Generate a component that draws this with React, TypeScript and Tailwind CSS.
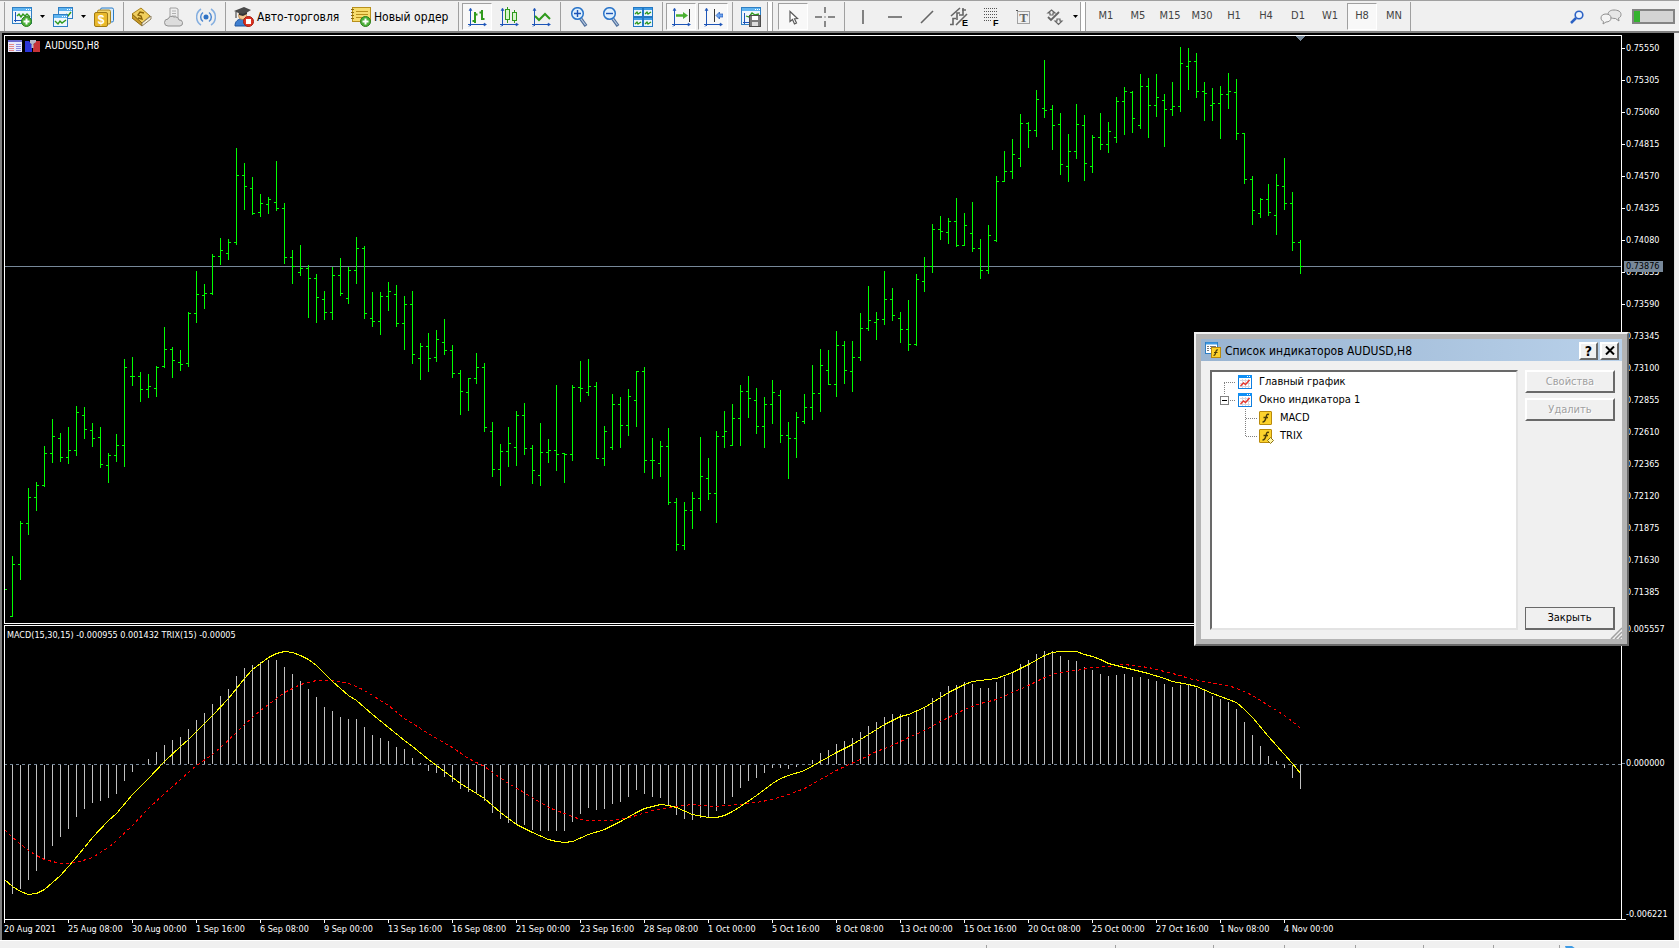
import React, { useState } from 'react';
import clsx from 'clsx';

type Bar = [open: number, high: number, low: number, close: number];
type Point = [bar: number, y: number];

const BAR_STEP = 8;
const BAR_START = 4;
const ZERO_Y = 764;

const barX = (index: number) => BAR_START + index * BAR_STEP;

const BARS: Bar[] = [
  [589, 589, 589, 589], [616, 556, 617, 564], [564, 521, 580, 523], [523, 488, 535, 497], [497, 482, 511, 485],
  [485, 446, 487, 453], [453, 419, 463, 436], [438, 433, 462, 457], [457, 427, 464, 450], [450, 406, 456, 412],
  [415, 407, 439, 429], [430, 423, 447, 438], [437, 427, 468, 464], [465, 453, 483, 455], [455, 434, 462, 445],
  [445, 359, 467, 367], [376, 357, 386, 376], [376, 372, 402, 389], [389, 374, 398, 386], [388, 366, 397, 367],
  [366, 327, 368, 349], [349, 347, 378, 360], [362, 350, 371, 364], [363, 312, 367, 313], [313, 271, 323, 294],
  [295, 284, 309, 293], [293, 254, 295, 256], [256, 238, 265, 250], [253, 239, 260, 242], [242, 148, 245, 175],
  [175, 163, 210, 186], [188, 177, 215, 213], [212, 194, 217, 203], [204, 197, 214, 199], [202, 161, 211, 208],
  [208, 203, 264, 257], [257, 250, 284, 266], [272, 245, 276, 268], [268, 265, 318, 278], [278, 274, 323, 297],
  [299, 291, 320, 312], [312, 267, 320, 275], [275, 258, 296, 293], [298, 267, 304, 270], [270, 237, 284, 248],
  [248, 246, 319, 313], [318, 292, 327, 321], [321, 292, 335, 296], [296, 282, 311, 291], [294, 285, 327, 323],
  [323, 296, 350, 304], [304, 291, 364, 354], [358, 343, 380, 346], [346, 333, 372, 358], [357, 330, 362, 339],
  [342, 319, 355, 350], [350, 345, 378, 373], [373, 370, 415, 391], [392, 378, 411, 378], [378, 353, 384, 367],
  [367, 363, 432, 427], [431, 422, 477, 469], [469, 444, 486, 451], [451, 427, 467, 443], [447, 411, 466, 415],
  [415, 403, 455, 448], [448, 445, 484, 470], [475, 423, 486, 452], [452, 439, 463, 450], [450, 385, 471, 454],
  [453, 453, 483, 454], [454, 385, 461, 387], [387, 361, 402, 388], [392, 359, 396, 386], [386, 382, 459, 458],
  [458, 426, 466, 431], [447, 394, 450, 404], [404, 397, 448, 425], [425, 389, 436, 396], [400, 371, 427, 371],
  [371, 367, 473, 460], [460, 438, 479, 460], [463, 441, 477, 446], [446, 428, 505, 502], [502, 498, 551, 544],
  [545, 502, 550, 510], [510, 492, 529, 498], [498, 437, 511, 476], [478, 458, 500, 493], [493, 431, 523, 436],
  [436, 411, 448, 431], [445, 404, 446, 418], [418, 385, 446, 391], [391, 376, 418, 398], [400, 388, 434, 426],
  [426, 397, 448, 404], [404, 380, 424, 392], [395, 390, 443, 435], [435, 422, 479, 438], [438, 412, 458, 417],
  [421, 394, 424, 407], [407, 365, 420, 393], [393, 349, 412, 365], [370, 350, 385, 384], [384, 331, 397, 345],
  [345, 341, 384, 370], [371, 341, 392, 357], [357, 313, 361, 328], [328, 286, 331, 320], [322, 312, 340, 319],
  [319, 271, 325, 299], [299, 288, 321, 315], [318, 312, 343, 329], [329, 300, 351, 344], [344, 274, 346, 279],
  [281, 257, 292, 266], [266, 224, 273, 229], [229, 216, 240, 231], [232, 218, 244, 221], [221, 198, 247, 245],
  [245, 213, 246, 225], [233, 202, 252, 248], [248, 239, 279, 270], [270, 225, 274, 235], [240, 176, 242, 181],
  [181, 151, 182, 171], [171, 139, 179, 154], [158, 114, 167, 123], [123, 122, 148, 130], [130, 90, 137, 99],
  [108, 60, 118, 110], [109, 105, 150, 125], [124, 113, 175, 164], [166, 134, 182, 151], [151, 104, 159, 124],
  [125, 115, 181, 163], [166, 135, 173, 137], [137, 113, 150, 144], [144, 122, 153, 131], [137, 97, 143, 101],
  [101, 87, 135, 91], [92, 91, 133, 118], [125, 74, 129, 86], [86, 78, 138, 105], [105, 74, 117, 97],
  [100, 94, 147, 109], [109, 82, 116, 106], [106, 47, 112, 63], [66, 48, 90, 61], [61, 53, 98, 91],
  [91, 82, 121, 93], [105, 88, 121, 103], [103, 86, 139, 94], [94, 73, 109, 91], [92, 79, 140, 133],
  [133, 133, 184, 179], [179, 176, 225, 210], [213, 198, 218, 199], [199, 184, 216, 212], [215, 174, 235, 185],
  [186, 158, 210, 203], [203, 192, 251, 242], [242, 240, 274, 266],
];

const HISTOGRAM: number[] = [
  764, 894, 889, 880, 871, 859, 846, 837, 829, 817, 809, 803, 801, 798, 794, 781, 772, 764, 759, 752,
  745, 740, 737, 729, 720, 713, 704, 696, 689, 676, 668, 665, 662, 660, 660, 667, 674, 681, 689, 697,
  707, 711, 717, 719, 719, 727, 735, 738, 741, 747, 749, 758, 763, 771, 773, 777, 782, 789, 792, 794,
  801, 813, 819, 823, 824, 825, 830, 831, 831, 831, 831, 822, 814, 808, 810, 809, 804, 802, 797, 790,
  794, 797, 798, 806, 815, 819, 820, 818, 818, 811, 804, 797, 788, 781, 778, 773, 768, 768, 769, 767,
  764, 760, 753, 750, 744, 741, 738, 732, 726, 722, 717, 714, 714, 717, 710, 707, 698, 692, 686, 685,
  682, 684, 688, 688, 682, 677, 672, 664, 660, 654, 651, 651, 656, 660, 661, 667, 670, 674, 676, 675,
  674, 677, 677, 679, 681, 684, 687, 685, 685, 688, 691, 696, 699, 702, 709, 722, 735, 746, 756, 761,
  768, 778, 789,
];

const TRIX: Point[] = [
  [0, 879], [1, 886], [2, 891], [3, 894], [4, 893], [5, 889], [6, 882], [7, 875], [8, 866], [10, 847],
  [11, 837], [13, 820], [14, 813], [16, 794], [18, 778], [20, 761], [22, 746], [23, 739], [26, 715], [28, 698],
  [30, 678], [31, 669], [32, 663], [33, 657], [34, 653], [35, 651], [36, 652], [37, 655], [38, 659], [39, 665],
  [40, 673], [41, 681], [43, 695], [44, 700], [46, 714], [48, 727], [50, 740], [51, 746], [53, 759], [55, 771],
  [57, 783], [59, 793], [60, 798], [62, 812], [64, 824], [66, 832], [68, 839], [69, 841], [70, 842], [71, 841],
  [73, 834], [75, 829], [77, 821], [79, 812], [80, 808], [81, 806], [82, 804], [83, 805], [84, 807], [86, 814],
  [88, 817], [89, 817], [90, 815], [91, 811], [92, 806], [94, 795], [96, 783], [97, 778], [98, 775], [100, 770],
  [102, 761], [104, 752], [106, 744], [108, 734], [110, 724], [112, 716], [113, 714], [115, 707], [116, 702],
  [118, 692], [120, 684], [121, 681], [122, 680], [124, 678], [126, 672], [128, 664], [130, 655], [131, 652],
  [132, 651], [134, 651], [135, 654], [136, 656], [137, 659], [138, 663], [139, 665], [141, 669], [143, 673],
  [145, 678], [146, 681], [148, 684], [149, 686], [151, 693], [153, 699], [154, 702], [155, 709], [156, 717],
  [158, 736], [160, 754], [161, 763], [162, 773],
];

const SIGNAL: Point[] = [
  [0, 829], [1, 837], [3, 850], [4, 855], [5, 859], [6, 861], [7, 863], [8, 863], [9, 862], [11, 857],
  [13, 847], [14, 840], [16, 825], [18, 808], [20, 793], [22, 779], [23, 772], [24, 765], [26, 754], [27, 747],
  [29, 732], [30, 724], [32, 710], [34, 698], [35, 692], [36, 688], [37, 684], [38, 682], [39, 680], [41, 680],
  [42, 681], [43, 683], [44, 686], [45, 690], [47, 700], [48, 705], [50, 718], [52, 728], [54, 738], [56, 747],
  [58, 758], [60, 766], [61, 772], [63, 783], [66, 797], [68, 807], [69, 810], [71, 816], [72, 819], [73, 820],
  [76, 820], [78, 817], [79, 815], [81, 810], [83, 807], [85, 805], [86, 804], [87, 805], [89, 806], [90, 805],
  [92, 804], [94, 802], [96, 799], [98, 794], [100, 788], [102, 779], [104, 770], [105, 766], [107, 759],
  [109, 751], [111, 745], [113, 737], [115, 730], [117, 721], [119, 713], [120, 709], [122, 703], [124, 699],
  [126, 692], [128, 685], [130, 677], [131, 674], [132, 672], [134, 670], [136, 667], [138, 666], [140, 664],
  [141, 665], [143, 667], [145, 671], [147, 675], [148, 678], [150, 681], [152, 684], [153, 685], [155, 691],
  [156, 695], [158, 705], [160, 715], [161, 721], [162, 728],
];

const PRICES = [
  '0.75550', '0.75305', '0.75060', '0.74815', '0.74570', '0.74325', '0.74080', '0.73835', '0.73590',
  '0.73345', '0.73100', '0.72855', '0.72610', '0.72365', '0.72120', '0.71875', '0.71630', '0.71385',
];

const DATES = [
  '20 Aug 2021', '25 Aug 08:00', '30 Aug 00:00', '1 Sep 16:00', '6 Sep 08:00', '9 Sep 00:00', '13 Sep 16:00',
  '16 Sep 08:00', '21 Sep 00:00', '23 Sep 16:00', '28 Sep 08:00', '1 Oct 00:00', '5 Oct 16:00', '8 Oct 08:00',
  '13 Oct 00:00', '15 Oct 16:00', '20 Oct 08:00', '25 Oct 00:00', '27 Oct 16:00', '1 Nov 08:00', '4 Nov 00:00',
];

const TIMEFRAMES = ['M1', 'M5', 'M15', 'M30', 'H1', 'H4', 'D1', 'W1', 'H8', 'MN'];

const toPath = (points: Point[]) =>
  points.map(([bar, y], i) => `${i === 0 ? 'M' : 'L'}${barX(bar) + 0.5} ${y + 0.5}`).join('');

/* ---------- icons ---------- */

const Icon: React.FC<{ children: React.ReactNode }> = ({ children }) => (
  <svg width="20" height="20" viewBox="0 0 20 20" fill="none" aria-hidden="true" className="shrink-0">
    {children}
  </svg>
);

const WindowFrame = ({ x, y, w, h }: { x: number; y: number; w: number; h: number }) => (
  <g>
    <rect x={x + 0.5} y={y + 0.5} width={w - 1} height={h - 1} fill="#eef6fd" stroke="#2f7fc4" />
    <rect x={x + 1} y={y + 1} width={w - 2} height="3" fill="#5fb4f0" />
    <path d={`M${x + w - 6} ${y + 2.5}h1m1 0h1m1 0h1`} stroke="#fff" />
  </g>
);

const PlusBadge = () => (
  <g>
    <circle cx="14.5" cy="14.5" r="5" fill="#4db13a" stroke="#2b7d1c" />
    <path d="M14.5 11.5v6M11.5 14.5h6" stroke="#fff" strokeWidth="2" />
  </g>
);

const Axes = () => (
  <g stroke="#1d55b8" fill="#1d55b8">
    <path d="M3.5 3v16M1 17.5h17" />
    <path d="M2 3.5L3.5 1 5 3.5zM17 16l2.5 1.5L17 19z" strokeWidth="0.5" />
    <path d="M2 19.5l2-2" />
  </g>
);

const NewChartIcon = () => (
  <Icon>
    <WindowFrame x={0} y={0} w={20} h={17} />
    <path d="M3.5 5v10M2 13.5h9" stroke="#1d55b8" />
    <path d="M5 9l2-2 2 3 2-3 2 2 2-2 3 3" stroke="#2f9a1c" strokeWidth="1.4" />
    <PlusBadge />
  </Icon>
);

const ProfilesIcon = () => (
  <Icon>
    <WindowFrame x={5} y={0} w={15} h={12} />
    <path d="M13 7l2 2 3-4" stroke="#2f9a1c" strokeWidth="1.4" />
    <WindowFrame x={0} y={7} w={15} h={13} />
    <path d="M2 14l3 3 2-3 2 2 4-3" stroke="#2f9a1c" strokeWidth="1.4" />
  </Icon>
);

const SymbolsIcon = () => (
  <Icon>
    <rect x="6.5" y="1" width="13" height="14" rx="1.5" fill="#d9ecfb" stroke="#2a7cc8" />
    <rect x="3.5" y="3" width="13" height="14" rx="1.5" fill="#f3d56a" stroke="#a88420" />
    <rect x="0.5" y="5.5" width="13" height="14" rx="1.5" fill="#e9b92c" stroke="#a07a14" />
    <text x="7" y="17" fontSize="12" fontWeight="bold" fill="#fff" textAnchor="middle" fontFamily="Liberation Sans, sans-serif">$</text>
  </Icon>
);

const BookIcon = () => (
  <Icon>
    <path d="M0 7L9 1l9 8-8 7z" fill="#f1cf5e" stroke="#a9821d" />
    <path d="M0 7v4l10 8v-3z" fill="#c99a27" stroke="#8e6a10" />
    <path d="M10 16l9-7v3l-9 7z" fill="#f7f0da" stroke="#8f8264" />
    <path d="M12 6l-4-1-2 3 3 1 1 3-4-1" stroke="#8b6407" strokeWidth="1.4" />
  </Icon>
);

const CloudIcon = () => (
  <Icon>
    <path d="M6 1h6l2 1v10H6z" fill="#eee" stroke="#a0a0a0" />
    <path d="M8 4h4M8 6.5h4M8 9h4" stroke="#b0b0b0" />
    <path d="M4 19a3.5 3.5 0 0 1 0-7 4 4 0 0 1 6-2 4 4 0 0 1 5 3 3 3 0 0 1 1 6z" fill="#dcdcdc" stroke="#909090" />
  </Icon>
);

const SignalIcon = () => (
  <Icon>
    <circle cx="10" cy="10" r="2.5" fill="#2f72c4" />
    <path d="M7 5.500a5.500 5.500 0 0 0 0 9M13 5.500a5.500 5.500 0 0 1 0 9" stroke="#4f8ad2" strokeWidth="1.5" />
    <path d="M5 2a9.500 9.500 0 0 0 0 16M15 2a9.500 9.500 0 0 1 0 16" stroke="#85afe0" strokeWidth="1.5" />
  </Icon>
);

const RobotIcon = () => (
  <Icon>
    <path d="M1 19c0-5 3-7 7-7s7 2 7 7z" fill="#3f7fd0" stroke="#1f549c" />
    <circle cx="8.5" cy="8.5" r="4" fill="#f2c690" stroke="#b07a3c" strokeWidth="0.7" />
    <path d="M0 4l10-4 7 3-8 5z" fill="#4a4a4a" />
    <path d="M5 6v2l4 1 4-2V5L9 7z" fill="#333" />
    <path d="M2 5v6" stroke="#333" />
    <circle cx="14.5" cy="14.5" r="5" fill="#dd3322" stroke="#a81c10" />
    <rect x="12" y="12" width="5" height="5" fill="#fff" />
  </Icon>
);

const OrderIcon = () => (
  <Icon>
    <rect x="1.5" y="0.5" width="18" height="14" fill="#f7dc6c" stroke="#b8901c" />
    <path d="M0 2.5h3M0 5.5h3M0 8.5h3M0 11.5h3" stroke="#8c6b12" />
    <path d="M5 4.5h12M5 7.5h12M5 10.5h6" stroke="#b8901c" />
    <PlusBadge />
  </Icon>
);

const BarsIcon = () => (
  <Icon>
    <Axes />
    <path d="M8 5v11M5.5 14H8M8 7.5h2.5M15 3v10M12.5 5.5H15M15 12h2.5" stroke="#2f9a1c" strokeWidth="2" />
  </Icon>
);

const CandlesIcon = () => (
  <Icon>
    <Axes />
    <path d="M8.5 0v16M15.5 3v13" stroke="#2f9a1c" />
    <rect x="6.5" y="2.5" width="4" height="10" fill="#d7f5cc" stroke="#2f9a1c" />
    <rect x="13.5" y="5.5" width="4" height="8" fill="#d7f5cc" stroke="#2f9a1c" />
  </Icon>
);

const LineIcon = () => (
  <Icon>
    <Axes />
    <path d="M4 9l4 4 6-6 5 5" stroke="#2f9a1c" strokeWidth="2" />
  </Icon>
);

const ZoomIcon = ({ plus = false }: { plus?: boolean }) => (
  <Icon>
    <path d="M12 12l5 7" stroke="#4f6f9c" strokeWidth="3.4" />
    <path d="M12 12l4.500 6" stroke="#b9cbe2" strokeWidth="1.2" />
    <circle cx="8.5" cy="6.5" r="5.8" fill="#dff0fd" stroke="#2a74c9" strokeWidth="1.5" />
    <path d={plus ? 'M5 6.5h7M8.5 3v7' : 'M5 6.5h7'} stroke="#1d55b8" strokeWidth="1.4" />
  </Icon>
);

const TileIcon = () => (
  <Icon>
    {[0, 10].map((x) =>
      [0, 10].map((y) => (
        <g key={`${x}-${y}`}>
          <rect x={x + 0.5} y={y + 0.5} width="9" height="9" fill="#e8f4fd" stroke="#2378c4" />
          <path d={`M${x + 1} ${y + 2}h8`} stroke="#3f9be4" strokeWidth="2" />
          <path d={`M${x + 2} ${y + 7}l2-2 1 2 3-2`} stroke="#2f9a1c" strokeWidth="1.3" />
        </g>
      )),
    )}
  </Icon>
);

const AutoScrollIcon = () => (
  <Icon>
    <Axes />
    <path d="M18.5 2v13" stroke="#333" />
    <path d="M5 8.5h7" stroke="#49b030" strokeWidth="2.5" />
    <path d="M12 5l5 3.500-5 3.500z" fill="#49b030" />
  </Icon>
);

const ShiftIcon = () => (
  <Icon>
    <Axes />
    <path d="M11.5 2v13" stroke="#333" />
    <path d="M13 8.5L16.5 5v2H20v3h-3.500v2z" fill="#6fa5ee" stroke="#1d55b8" strokeWidth="0.7" />
  </Icon>
);

const TemplateIcon = () => (
  <Icon>
    <WindowFrame x={0} y={0} w={20} h={18} />
    <path d="M5 9l3 1 3-4 3 2 4-1" stroke="#2f9a1c" strokeWidth="1.3" />
    <path d="M3.5 6v11M2 15.5h7" stroke="#1d55b8" />
    <rect x="8.5" y="8.5" width="11" height="11" fill="#7b7b7b" stroke="#4c4c4c" />
    <rect x="11" y="9" width="6" height="4" fill="#fff" />
    <rect x="11" y="15" width="6" height="4" fill="#ddd" />
  </Icon>
);

const CursorIcon = () => (
  <Icon>
    <path d="M7 4.5v10l2.500-2 2 4.500 2-1-2-4.300 3-.2z" fill="#fff" stroke="#5a5a5a" strokeWidth="1.2" />
  </Icon>
);

const CrosshairIcon = () => (
  <Icon>
    <path d="M10 0v6M10 14v6M0 10h7M13 10h7M9.5 10h1" stroke="#666" strokeWidth="1.5" />
  </Icon>
);

const StrokeIcon = ({ d }: { d: string }) => (
  <Icon>
    <path d={d} stroke="#666" strokeWidth="1.6" />
  </Icon>
);

const ChannelIcon = () => (
  <Icon>
    <path d="M2 9L11 1M7 18L18 7M1 17.5h3v-6h3M8 13V6h3M10 8h4V1M13 3h4" stroke="#666" strokeWidth="1.6" />
    <text x="13" y="19" fontSize="9" fontWeight="bold" fill="#000" fontFamily="Liberation Sans, sans-serif">E</text>
  </Icon>
);

const FiboIcon = () => (
  <Icon>
    <path d="M3 1.5h14M3 4.5h14M3 7.5h14M3 10.5h14M3 13.5h7" stroke="#555" strokeDasharray="1 1" />
    <text x="12" y="19" fontSize="9" fontWeight="bold" fill="#000" fontFamily="Liberation Sans, sans-serif">F</text>
  </Icon>
);

const TextIcon = () => (
  <Icon>
    <rect x="4.5" y="4.5" width="12" height="12" stroke="#555" strokeDasharray="1 1" />
    <path d="M3 3.5h2" stroke="#555" />
    <text x="10.5" y="15" fontSize="13" fontWeight="bold" fill="#666" textAnchor="middle" fontFamily="Liberation Serif, serif">T</text>
  </Icon>
);

const ShapesIcon = () => (
  <Icon>
    <path d="M6.5 3L10 6H8v2H5V6H3zM12 12h3v2h2l-3.500 3.500L10 14h2z" stroke="#666" strokeWidth="1.2" />
    <path d="M3 10l3 3L14 5" stroke="#666" strokeWidth="1.8" />
  </Icon>
);

const SearchIcon = () => (
  <svg width="14" height="14" viewBox="0 0 14 14" fill="none" aria-hidden="true">
    <path d="M1 13l5-5" stroke="#2c62c4" strokeWidth="2.5" />
    <circle cx="9" cy="5" r="3.8" fill="#eef5ff" stroke="#2c62c4" strokeWidth="1.6" />
  </svg>
);

const ChatIcon = () => (
  <svg width="22" height="16" viewBox="0 0 22 16" fill="none" aria-hidden="true">
    <path d="M14 1c4 0 7 1.500 7 4.500 0 2-1 3-2.500 3.500L19 12l-3.500-2.500C11 9.500 8 8 8 5.500S10 1 14 1z" fill="#e6e6e6" stroke="#8f8f8f" />
    <path d="M6 5c3 0 5 1.500 5 4s-2 4-5 4l-3 2 .5-2.500C2 12 1 10.500 1 9c0-2.500 2-4 5-4z" fill="#f4f4f4" stroke="#8f8f8f" />
  </svg>
);

const ChartItemIcon = () => (
  <svg width="14" height="14" viewBox="0 0 14 14" fill="none" aria-hidden="true">
    <rect x="0.5" y="0.5" width="13" height="13" fill="#fff" stroke="#0f7fe0" />
    <path d="M0 1.5h14" stroke="#0f8ff5" strokeWidth="3" />
    <path d="M9 1.5h1M11 1.5h1" stroke="#fff" />
    <path d="M2 5.5h10M2 8.5h10M2 11.5h10M4.5 4v9M7.5 4v9M10.5 4v9" stroke="#d5d5dd" />
    <path d="M2.5 11l3-3 2 1.500L11.5 5" stroke="#e6362c" strokeWidth="1.4" />
  </svg>
);

const FunctionIcon = ({ custom = false }: { custom?: boolean }) => (
  <svg width="14" height="14" viewBox="0 0 14 14" fill="none" aria-hidden="true" className="overflow-visible">
    <rect x="0.5" y="0.5" width="12" height="13" rx="0.5" fill="#fcd22c" stroke="#b98a0c" />
    <path d="M10 3.5C8 2.5 7.5 4 7 6.5S6 11 3.5 11M4.5 6.5h4.500" stroke="#4c3c08" strokeWidth="1.4" />
    {custom && <path d="M11.5 8.500l3 3-3 3-3-3z" fill="#fff6a8" stroke="#8b6f10" />}
  </svg>
);

const DialogIcon = () => (
  <svg width="17" height="17" viewBox="0 0 17 17" fill="none" aria-hidden="true">
    <rect x="0.5" y="0.5" width="12" height="11" fill="#fff" stroke="#2f7fc4" />
    <path d="M1 1.5h11" stroke="#3f9be4" strokeWidth="2" />
    <path d="M2 4.5h2M5 4.5h6M2 6.5h2M5 6.5h3M2 8.5h2" stroke="#777" />
    <rect x="6.5" y="5.5" width="9" height="10" fill="#fcd22c" stroke="#b98a0c" />
    <path d="M13 8c-1.500-.5-2 .5-2.300 2.500S10 13.5 8.500 13.5M9 10.5h3.500" stroke="#4c3c08" strokeWidth="1.2" />
  </svg>
);

/* ---------- toolbar ---------- */

interface ToolButtonProps {
  label: string;
  pressed?: boolean;
  children: React.ReactNode;
}

const ToolButton: React.FC<ToolButtonProps> = ({ label, pressed, children }) => (
  <button
    type="button"
    aria-label={label}
    aria-pressed={pressed}
    className={clsx(
      'mx-px flex h-[27px] w-[30px] shrink-0 items-center justify-center border',
      pressed ? 'border-t-[#a0a0a0] border-l-[#a0a0a0] border-r-white border-b-white bg-[#f8f8f8]' : 'border-transparent',
    )}
  >
    {children}
  </button>
);

const Caret = ({ label }: { label: string }) => (
  <button type="button" aria-label={label} className="flex h-7 w-[9px] shrink-0 items-center justify-center">
    <svg width="5" height="3" viewBox="0 0 5 3" aria-hidden="true">
      <path d="M0 0h5L2.500 3z" fill="#000" />
    </svg>
  </button>
);

const Separator = () => <span className="mr-[2px] ml-[3px] h-full w-px shrink-0 bg-[#a0a0a0]" />;

const GroupEdge = () => (
  <span className="mr-[3px] flex h-full shrink-0">
    <span className="w-px bg-[#a0a0a0]" />
    <span className="mr-px w-[5px] border-r border-[#a0a0a0] bg-white" />
  </span>
);

const Toolbar = () => {
  const [timeframe, setTimeframe] = useState('H8');

  return (
    <header className="flex h-[33px] shrink-0 items-center overflow-hidden border-t border-b-2 border-t-[#a0a0a0] border-b-[#808080] bg-[#f0f0f0] pt-px text-[12px] text-black">
      <span className="mr-px ml-1 h-full w-px shrink-0 bg-[#a0a0a0]" />
      <ToolButton label="Новый график"><NewChartIcon /></ToolButton>
      <Caret label="Список графиков" />
      <ToolButton label="Профили"><ProfilesIcon /></ToolButton>
      <Caret label="Список профилей" />
      <ToolButton label="Символы"><SymbolsIcon /></ToolButton>
      <Separator />
      <ToolButton label="Редактор"><BookIcon /></ToolButton>
      <ToolButton label="Облако"><CloudIcon /></ToolButton>
      <ToolButton label="Сигналы"><SignalIcon /></ToolButton>
      <Separator />
      <button type="button" className="flex h-7 w-[117px] shrink-0 items-center gap-[3px] pl-[6px] whitespace-nowrap">
        <RobotIcon />
        Авто-торговля
      </button>
      <button type="button" className="flex h-7 w-[110px] shrink-0 items-center gap-[3px] pl-[6px] whitespace-nowrap">
        <OrderIcon />
        Новый ордер
      </button>
      <Separator />
      <ToolButton label="Бары" pressed><BarsIcon /></ToolButton>
      <ToolButton label="Свечи"><CandlesIcon /></ToolButton>
      <ToolButton label="Линия"><LineIcon /></ToolButton>
      <Separator />
      <ToolButton label="Увеличить"><ZoomIcon plus /></ToolButton>
      <ToolButton label="Уменьшить"><ZoomIcon /></ToolButton>
      <ToolButton label="Окна плиткой"><TileIcon /></ToolButton>
      <Separator />
      <ToolButton label="Автопрокрутка" pressed><AutoScrollIcon /></ToolButton>
      <ToolButton label="Сдвиг графика" pressed><ShiftIcon /></ToolButton>
      <Separator />
      <ToolButton label="Шаблоны"><TemplateIcon /></ToolButton>
      <GroupEdge />
      <ToolButton label="Курсор" pressed><CursorIcon /></ToolButton>
      <ToolButton label="Перекрестие"><CrosshairIcon /></ToolButton>
      <Separator />
      <ToolButton label="Вертикальная линия"><StrokeIcon d="M10 3v14" /></ToolButton>
      <ToolButton label="Горизонтальная линия"><StrokeIcon d="M3 10h14" /></ToolButton>
      <ToolButton label="Трендовая линия"><StrokeIcon d="M4 16L16 4" /></ToolButton>
      <ToolButton label="Канал"><ChannelIcon /></ToolButton>
      <ToolButton label="Фибоначчи"><FiboIcon /></ToolButton>
      <ToolButton label="Текст"><TextIcon /></ToolButton>
      <ToolButton label="Фигуры"><ShapesIcon /></ToolButton>
      <Caret label="Список фигур" />
      <GroupEdge />
      {TIMEFRAMES.map((tf) => (
        <button
          key={tf}
          type="button"
          aria-pressed={tf === timeframe}
          onClick={() => setTimeframe(tf)}
          className={clsx(
            'mx-px h-[27px] w-[30px] shrink-0 border text-[11px] text-[#444]',
            tf === timeframe
              ? 'border-t-[#a0a0a0] border-l-[#a0a0a0] border-r-white border-b-white bg-[#f8f8f8]'
              : 'border-transparent',
          )}
        >
          {tf}
        </button>
      ))}
      <span className="h-full w-px shrink-0 bg-[#a0a0a0]" />
      <div className="ml-auto flex shrink-0 items-center pr-1">
        <button type="button" aria-label="Поиск" className="mr-4"><SearchIcon /></button>
        <button type="button" aria-label="Чат" className="mr-[10px]"><ChatIcon /></button>
        <div className="h-[15px] w-[43px] border-2 border-[#848484] bg-[#d4d4d4]">
          <div className="h-full w-[6px] bg-[#35b32f]" />
        </div>
      </div>
    </header>
  );
};

/* ---------- chart ---------- */

const PricePlot = () => (
  <svg width="1616" height="587" viewBox="5 36 1616 587" className="block" shapeRendering="crispEdges">
    <path d="M1296 36h9l-4.500 5z" fill="#778899" />
    <g fill="#00ff00">
      {BARS.map(([open, high, low, close], i) => (
        <g key={i}>
          <rect x={barX(i)} y={high} width="1" height={low - high} />
          <rect x={barX(i) - 2} y={open} width="2" height="1" />
          <rect x={barX(i) + 1} y={close} width="2" height="1" />
        </g>
      ))}
    </g>
  </svg>
);

const IndicatorPlot = () => (
  <svg width="1616" height="293" viewBox="5 626 1616 293" className="block" shapeRendering="crispEdges">
    <path d="M4 764.5H1625" stroke="#778899" strokeDasharray="3 3" />
    <g fill="#c0c0c0">
      {HISTOGRAM.map((y, i) => (
        <rect key={i} x={barX(i)} y={Math.min(y, ZERO_Y + 1)} width="1" height={y > ZERO_Y ? y - ZERO_Y - 1 : ZERO_Y - y} />
      ))}
    </g>
    <path d={toPath(SIGNAL)} fill="none" stroke="#ff0000" strokeDasharray="3 3" />
    <path d={toPath(TRIX)} fill="none" stroke="#ffff00" />
  </svg>
);

const PriceAxis = () => (
  <div className="relative w-[53px] shrink-0 border-l border-white">
    <ul className="-mt-[3px]">
      {PRICES.map((price) => (
        <li key={price} className="flex h-8 items-center gap-px">
          <span className="h-px w-[3px] bg-white" />
          {price}
        </li>
      ))}
    </ul>
    <span className="absolute top-[226px] left-[2px] flex h-[11px] w-[39px] items-center bg-[#778899] pl-[2px] text-black">
      0.73876
    </span>
  </div>
);

const Chart = () => (
  <main className="relative flex flex-1 flex-col border-l-2 border-l-[#808080] bg-black pt-[2px] pl-[2px] text-[9px] leading-none text-white">
    <section className="relative flex h-[589px] shrink-0 border-l border-white">
      <div className="relative min-w-0 flex-1 overflow-hidden border-y border-white">
        <div className="absolute inset-x-0 top-[230px] h-px bg-[#778899]" />
        <div className="relative"><PricePlot /></div>
        <h1 className="absolute top-[4px] left-[3px] flex items-center gap-[3px] text-[10px]">
          <svg width="14" height="12" viewBox="0 0 14 12" aria-hidden="true">
            <rect width="14" height="12" fill="#e9e9fb" />
            <rect width="14" height="2" fill="#6a6ad0" />
            <path d="M1 4.5h5M1 6.5h5M1 8.5h5M1 10.5h5" stroke="#e58a8a" />
            <path d="M8 4.5h5M8 6.5h5M8 8.5h5M8 10.5h5" stroke="#8a8ae0" />
          </svg>
          <svg width="15" height="12" viewBox="0 0 15 12" aria-hidden="true">
            <path d="M0 1h4l3 4v7H0z" fill="#2b35d8" />
            <path d="M15 1h-4L8 5v7h7z" fill="#c63338" />
            <path d="M5 0h6v2L8.5 4v4h-2V4L5 3z" fill="#b9b9c8" />
          </svg>
          <span className="ml-[2px]">AUDUSD,H8</span>
        </h1>
      </div>
      <PriceAxis />
    </section>

    <section className="mt-px flex h-[295px] shrink-0 border-l border-white">
      <div className="relative min-w-0 flex-1 overflow-hidden border-y border-white">
        <IndicatorPlot />
        <h2 className="absolute top-[5px] left-[2px] text-[9px]">MACD(15,30,15) -0.000955 0.001432 TRIX(15) -0.00005</h2>
      </div>
      <ul className="flex w-[53px] shrink-0 flex-col border-l border-white">
        <li className="pl-1">0.005557</li>
        <li className="mt-[125px] flex items-center gap-px">
          <span className="h-px w-[3px] bg-[#778899]" />
          0.000000
        </li>
        <li className="mt-auto">
          <span className="block pl-1">-0.006221</span>
          <span className="block h-px w-1 bg-white" />
        </li>
      </ul>
    </section>

    <ol className="flex h-[20px] shrink-0 overflow-hidden">
      {DATES.map((date) => (
        <li key={date} className="w-16 shrink-0 whitespace-nowrap">
          <span className="block h-[3px] w-px bg-white" />
          <span className="block pt-[2px]">{date}</span>
        </li>
      ))}
    </ol>

    <IndicatorDialog />
  </main>
);

/* ---------- dialog ---------- */

const raised = 'border-2 border-t-white border-l-white border-r-[#696969] border-b-[#696969] bg-[#f0f0f0]';

const IndicatorDialog = () => (
  <div
    role="dialog"
    aria-labelledby="dialog-title"
    className="absolute top-[299px] left-[1192px] flex h-[314px] w-[435px] flex-col border-2 border-t-[#f0f0f0] border-r-[#696969] border-b-[#696969] border-l-[#f0f0f0] bg-[#b4b4b4] p-[5px] text-[11px] leading-normal text-black"
  >
    <div className="flex h-[22px] shrink-0 items-center bg-linear-to-r from-[#99b4d1] to-[#b9d1ea] pt-px pr-[3px] pl-[4px]">
      <DialogIcon />
      <h2 id="dialog-title" className="ml-[3px] flex-1 text-[12px] whitespace-nowrap">Список индикаторов AUDUSD,H8</h2>
      <button type="button" aria-label="Справка" className={clsx('mr-[2px] flex h-[18px] w-[19px] items-center justify-center text-[14px] leading-none font-bold', raised)}>
        ?
      </button>
      <button type="button" aria-label="Закрыть окно" className={clsx('flex h-[18px] w-[19px] items-center justify-center', raised)}>
        <svg width="10" height="9" viewBox="0 0 10 9" aria-hidden="true">
          <path d="M1 0.500l8 8M9 0.500l-8 8" stroke="#000" strokeWidth="2" />
        </svg>
      </button>
    </div>

    <div className="relative flex flex-1 gap-[7px] bg-[#f0f0f0] pt-[9px] pr-[7px] pb-[9px] pl-[9px]">
      <ul role="tree" aria-label="Индикаторы" className="flex-1 border-2 border-t-[#696969] border-r-[#e3e3e3] border-b-[#e3e3e3] border-l-[#696969] bg-white pt-px">
        <li role="treeitem" className="flex h-[18px] items-center gap-[7px]">
          <span className="flex">
            <svg width="26" height="18" viewBox="0 0 26 18" fill="none" aria-hidden="true" className="overflow-visible">
              <path d="M12.5 10v12M12 9.5h11" stroke="#808080" strokeDasharray="1 1" />
            </svg>
            <span className="self-center"><ChartItemIcon /></span>
          </span>
          Главный график
        </li>
        <li role="treeitem" aria-expanded="true" className="flex h-[18px] items-center gap-[7px]">
          <span className="flex items-center pl-2">
            <button type="button" aria-label="Свернуть" className="flex h-[9px] w-[9px] items-center justify-center border border-[#808080] bg-white">
              <span className="h-px w-[5px] bg-black" />
            </button>
            <svg width="9" height="18" viewBox="0 0 9 18" fill="none" aria-hidden="true">
              <path d="M1 9.5h5" stroke="#808080" strokeDasharray="1 1" />
            </svg>
            <ChartItemIcon />
          </span>
          Окно индикатора 1
        </li>
        <li role="treeitem" className="flex h-[18px] items-center gap-[7px]">
          <span className="flex items-center">
            <svg width="47" height="18" viewBox="0 0 47 18" fill="none" aria-hidden="true">
              <path d="M33.5 0v18M34 9.5h11" stroke="#808080" strokeDasharray="1 1" />
            </svg>
            <FunctionIcon />
          </span>
          MACD
        </li>
        <li role="treeitem" className="flex h-[18px] items-center gap-[7px]">
          <span className="flex items-center">
            <svg width="47" height="18" viewBox="0 0 47 18" fill="none" aria-hidden="true">
              <path d="M33.5 0v10M34 9.5h11" stroke="#808080" strokeDasharray="1 1" />
            </svg>
            <FunctionIcon custom />
          </span>
          TRIX
        </li>
      </ul>
      <div className="flex w-[90px] flex-col gap-[5px]">
        <button type="button" disabled className={clsx('h-[23px] pt-px text-[#a0a0a0] [text-shadow:1px_1px_0_#fff]', raised)}>Свойства</button>
        <button type="button" disabled className={clsx('h-[23px] pt-px text-[#a0a0a0] [text-shadow:1px_1px_0_#fff]', raised)}>Удалить</button>
        <button type="button" className="mt-auto h-[23px] border border-r-2 border-b-2 border-[#696969] bg-[#f0f0f0] pt-px">Закрыть</button>
      </div>
      <svg width="12" height="12" viewBox="0 0 12 12" aria-hidden="true" className="absolute right-0 bottom-0">
        <path d="M1 12L12 1M5 12l7-7M9 12l3-3" stroke="#a0a0a0" strokeWidth="1.5" />
      </svg>
    </div>
  </div>
);

const StatusBar = () => (
  <footer className="flex h-[8px] shrink-0 justify-end border-t border-white bg-[#f0f0f0] pt-[4px]">
    <span className="w-[129px] border-l border-[#a0a0a0]" />
    <span className="w-[98px] border-l border-[#a0a0a0]" />
    <span className="w-[71px] border-l border-[#a0a0a0]" />
    <span className="w-[71px] border-l border-[#a0a0a0]" />
    <span className="w-[68px] border-l border-[#a0a0a0]" />
    <span className="w-[70px] border-l border-[#a0a0a0]" />
    <span className="w-[66px] border-l border-[#a0a0a0]" />
    <span className="w-[120px] overflow-hidden border-l border-[#a0a0a0] pl-[5px]">
      <svg width="12" height="4" viewBox="0 0 12 4" aria-hidden="true">
        <path d="M0 1h7l4 3H1z" fill="#3f9be4" />
      </svg>
    </span>
  </footer>
);

const App = () => (
  <div className="flex min-h-screen flex-col bg-[#f0f0f0] font-[Tahoma,'DejaVu_Sans_Condensed','DejaVu_Sans',sans-serif]">
    <Toolbar />
    <div className="flex flex-1 border-r-4 border-[#f0f0f0]">
      <Chart />
      <span className="w-px bg-[#e3e3e3]" />
    </div>
    <StatusBar />
  </div>
);

export default App;
